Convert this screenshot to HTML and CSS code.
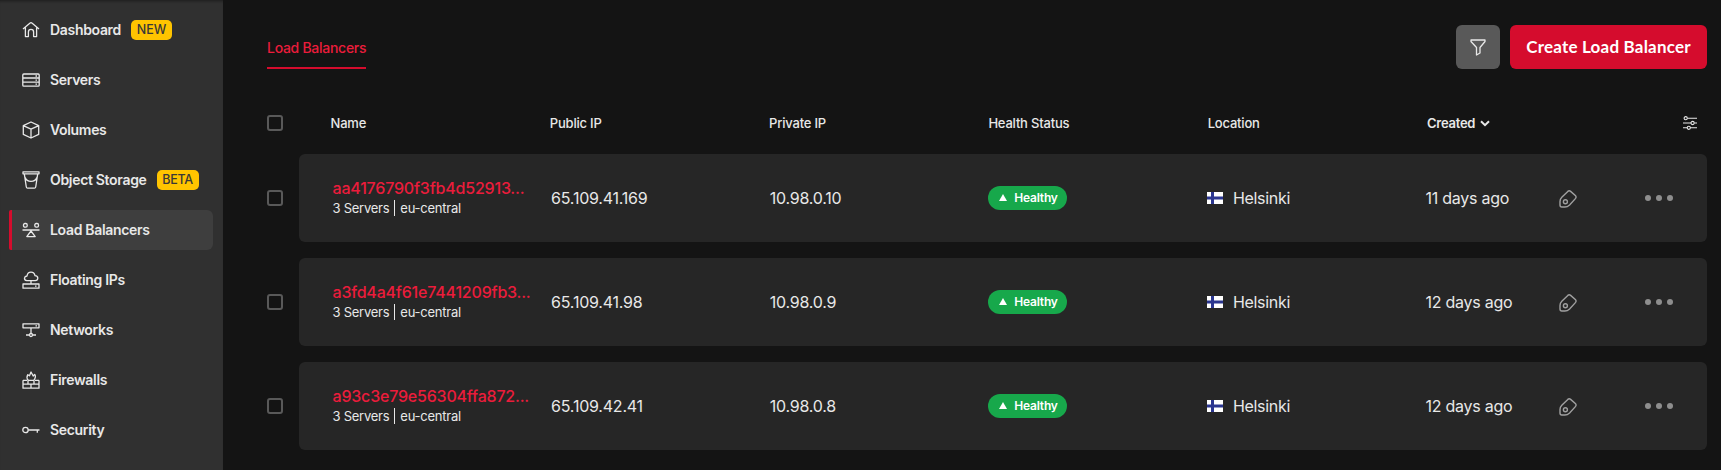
FILE: index.html
```html
<!DOCTYPE html>
<html lang="en">
<head>
<meta charset="utf-8">
<title>Load Balancers</title>
<link rel="stylesheet" href="styles.css">
</head>
<body>
<svg class="defs" width="0" height="0">
  <symbol id="tag" viewBox="0 0 20 20"><path d="M9.800 2.400Q11.200 1.200 12.600 2.400L17.600 6.800Q18.700 8 17.600 9.400L11.600 15.900Q9.400 18 6.800 18H3.800Q2 18 2 16V12.400Q2 10 3.800 8.200Z"/><circle cx="7.400" cy="12.800" r="2"/></symbol>
  <symbol id="flag" viewBox="0 0 16 12"><path fill="#fff" d="M0 0h16v12H0z"/><path fill="#2b3690" d="M4 0h3v12H4zM0 4.500h16v3H0z"/></symbol>
</svg>
<div class="app">
  <nav class="sidebar">
    <a class="item"><svg class="icon" viewBox="0 0 18 18"><path d="M1 8 7.800 2.200Q9 1.200 10.200 2.200L17 8M3.400 6.500V15.600H6.400V11Q6.400 8.400 9 8.400T11.600 11V15.600H14.600V6.500"/></svg><span class="label">Dashboard</span><span class="badge">NEW</span></a>
    <a class="item"><svg class="icon" viewBox="0 0 18 18"><rect x=".8" y="3" width="16.400" height="12.200" rx="1"/><path d="M1 7H17M1 11.200H17M13.500 5H15M13.500 9.100H15M13.500 13.200H15"/></svg><span class="label">Servers</span></a>
    <a class="item"><svg class="icon" viewBox="0 0 18 18"><path d="M9 1 16.700 4.600V13.400L9 17 1.300 13.400V4.600ZM1.300 4.600 9 8.100 16.700 4.600M9 8.100V17"/></svg><span class="label">Volumes</span></a>
    <a class="item"><svg class="icon" viewBox="0 0 18 18"><path d="M1 .8H17V2.800H1ZM2.300 2.800 4.300 16Q4.500 17.200 5.600 17.200H12.400Q13.500 17.200 13.700 16L15.700 2.800M3.200 6.500Q4.500 10.400 9 10.400T14.800 6.500"/></svg><span class="label">Object Storage</span><span class="badge beta">BETA</span></a>
    <a class="item active"><svg class="icon" viewBox="0 0 18 18"><rect x="1.500" y="2.500" width="3.700" height="3.700" rx="1.400"/><rect x="12.800" y="2.500" width="3.700" height="3.700" rx="1.400"/><path d="M.5 9H17.500M9 10 4.800 15.600H13.200Z"/></svg><span class="label">Load Balancers</span></a>
    <a class="item"><svg class="icon" viewBox="0 0 18 18"><path d="M4.800 9.600Q2.200 9.200 2.500 7 2.800 5.100 5 5 5.600 1.200 9 1.200 12.300 1.200 13 4.700 15.800 4.900 15.800 7.200 15.700 9.600 13.200 9.600ZM9 9.600V13M1 13H17V17.200H1ZM13 15.100H14.500"/></svg><span class="label">Floating IPs</span></a>
    <a class="item"><svg class="icon" viewBox="0 0 18 18"><path d="M1 2.800H17V6.800H1ZM9 6.800V12.500M4 14H7.400M10.600 14H14M13.500 4.800H15"/><circle cx="9" cy="14" r="1.500"/></svg><span class="label">Networks</span></a>
    <a class="item"><svg class="icon" viewBox="0 0 18 18"><path d="M1 9.300H5M13 9.300H17M1 9.300V17.200H17V9.300M1 13.200H17M6 9.500V13M12 9.500V13M9 13.200V17.200M6.200 9.300H11.800Q14.500 5.800 12.700 3.400L11.200 5 9 1 7.500 4.800 5.800 3.700Q4 6.800 6.200 9.300"/></svg><span class="label">Firewalls</span></a>
    <a class="item"><svg class="icon" viewBox="0 0 18 18"><circle cx="3.500" cy="9" r="2.700"/><path d="M6.200 9H17.500M15.300 9V11.800"/></svg><span class="label">Security</span></a>
  </nav>
  <main class="main">
    <header class="top">
      <span class="tab">Load Balancers</span>
      <div class="actions">
        <button class="filter"><svg viewBox="0 0 16 17"><path d="M1 1H15V2.500L10 8.500V14L6.500 16V8.500L1 2.500Z"/></svg></button>
        <button class="create">Create Load Balancer</button>
      </div>
    </header>
    <div class="line head">
      <span class="check"></span>
      <div class="cells">
        <span>Name</span><span>Public IP</span><span>Private IP</span><span>Health Status</span><span>Location</span>
        <span class="sorted">Created<svg class="chevron" viewBox="0 0 10 7"><path d="M1 1.200 5 5.200 9 1.200"/></svg></span>
        <svg class="sliders" viewBox="0 0 14 14"><path d="M4.500 2.200H14M0 7H8M11.300 7H14M0 11.800H4.200M7.400 11.800H14"/><circle cx="2.700" cy="2.200" r="1.600"/><circle cx="9.600" cy="7" r="1.600"/><circle cx="5.800" cy="11.800" r="1.600"/></svg>
      </div>
    </div>
    <div class="line">
      <span class="check"></span>
      <div class="card">
        <div class="name"><a class="link">aa4176790f3fb4d52913...</a><span class="sub">3 Servers <i class="bar"></i> eu-central</span></div>
        <span>65.109.41.169</span><span>10.98.0.10</span>
        <div class="health"><span class="pill"><i class="tri"></i>Healthy</span></div>
        <span class="loc"><svg class="flag"><use href="#flag"/></svg>Helsinki</span>
        <span class="age">11 days ago</span>
        <svg class="tag"><use href="#tag"/></svg>
        <div class="dots"><i></i><i></i><i></i></div>
      </div>
    </div>
    <div class="line">
      <span class="check"></span>
      <div class="card">
        <div class="name"><a class="link">a3fd4a4f61e7441209fb3...</a><span class="sub">3 Servers <i class="bar"></i> eu-central</span></div>
        <span>65.109.41.98</span><span>10.98.0.9</span>
        <div class="health"><span class="pill"><i class="tri"></i>Healthy</span></div>
        <span class="loc"><svg class="flag"><use href="#flag"/></svg>Helsinki</span>
        <span class="age">12 days ago</span>
        <svg class="tag"><use href="#tag"/></svg>
        <div class="dots"><i></i><i></i><i></i></div>
      </div>
    </div>
    <div class="line">
      <span class="check"></span>
      <div class="card">
        <div class="name"><a class="link">a93c3e79e56304ffa872...</a><span class="sub">3 Servers <i class="bar"></i> eu-central</span></div>
        <span>65.109.42.41</span><span>10.98.0.8</span>
        <div class="health"><span class="pill"><i class="tri"></i>Healthy</span></div>
        <span class="loc"><svg class="flag"><use href="#flag"/></svg>Helsinki</span>
        <span class="age">12 days ago</span>
        <svg class="tag"><use href="#tag"/></svg>
        <div class="dots"><i></i><i></i><i></i></div>
      </div>
    </div>
  </main>
</div>
</body>
</html>
```

FILE: styles.css
```css
* { box-sizing: border-box; }
body { margin: 0; background: #141414; color: #e8e8e8; font-family: Inter, "Liberation Sans", sans-serif; }
.defs { display: block; }
.app { display: flex; height: 470px; overflow: hidden; }
.sidebar { width: 223px; padding: 10px 10px 0 9px; background: #303030; display: flex; flex-direction: column; gap: 10px; flex: none; box-shadow: inset 0 3px 3px -2px #1c1c1c; }
.item { height: 40px; flex: none; display: flex; align-items: center; padding-left: 10px; border-left: 3px solid transparent; border-radius: 2px 6px 6px 2px; font-size: 14px; font-weight: 600; letter-spacing: -0.32px; }
.label { padding-bottom: 1px; }
.item.active { background: #3e3e3e; border-left-color: #d50c2d; }
.icon { width: 18px; height: 18px; margin-right: 10px; fill: none; stroke: #e8e8e8; stroke-width: 1.3; stroke-linejoin: round; }
.badge { height: 20px; width: 41px; margin-left: 10px; border-radius: 5px; background: #ffc400; color: #383838; font-size: 12.5px; line-height: 20px; font-weight: 500; text-align: center; letter-spacing: 0; }
.beta { width: 42px; letter-spacing: -0.3px; }
.main { flex: 1; padding: 25px 14px 0 44px; display: flex; flex-direction: column; }
.top { display: flex; justify-content: space-between; height: 44px; flex: none; margin-bottom: 38px; }
.tab { height: 44px; width: 99px; line-height: 46px; color: #eb1c3b; border-bottom: 2px solid #d50c2d; font-size: 14px; font-weight: 500; letter-spacing: -0.28px; white-space: nowrap; }
.actions { display: flex; gap: 10px; }
button { border: 0; padding: 0; border-radius: 6px; height: 44px; color: #fff; }
.filter { width: 44px; background: #595959; display: flex; align-items: center; justify-content: center; }
.filter svg { width: 16px; height: 17px; fill: none; stroke: #e8e8e8; stroke-width: 1.3; stroke-linejoin: round; }
.create { width: 197px; padding-bottom: 2px; background: #d50c2d; font: 700 17px Lato, sans-serif; letter-spacing: 0.2px; white-space: nowrap; }
.line { display: flex; align-items: center; height: 88px; flex: none; margin-bottom: 16px; }
.head { height: 32px; margin-bottom: 15px; }
.check { width: 16px; height: 16px; border: 2px solid #595959; border-radius: 3px; margin-right: 16px; flex: none; }
.cells, .card { display: flex; align-items: center; width: 1408px; }
.cells { padding-left: 31.5px; font-size: 13px; font-weight: 500; letter-spacing: -0.2px; }
.cells > span { width: 219.3px; flex: none; }
.cells .sorted { width: 256.5px; font-weight: 600; display: flex; align-items: center; letter-spacing: -0.25px; }
.chevron { width: 10px; height: 7px; margin-left: 5px; fill: none; stroke: #e8e8e8; stroke-width: 2; }
.sliders { width: 14px; height: 14px; fill: none; stroke: #e8e8e8; stroke-width: 1.1; }
.card { height: 88px; padding-left: 33.5px; background: #262626; border-radius: 6px; font-size: 16px; letter-spacing: -0.22px; }
.card > span, .card > div { width: 218.6px; flex: none; }
.name { display: flex; flex-direction: column; }
.link { color: #eb1c3b; font-weight: 500; line-height: 20px; letter-spacing: -0.2px; }
.sub { font-size: 13px; line-height: 20px; letter-spacing: -0.25px; display: flex; align-items: center; }
.bar { width: 1px; height: 16px; background: #e8e8e8; margin: 0 5px; }
.pill { display: flex; align-items: center; width: 79px; height: 24px; border-radius: 12px; background: #17a84b; color: #fff; font-size: 12px; font-weight: 600; padding: 0 0 1px 11px; letter-spacing: -0.2px; }
.tri { border: 4px solid transparent; border-top: 0; border-bottom: 7px solid #fff; margin-right: 7px; }
.card > .loc { display: flex; align-items: center; letter-spacing: -0.3px; }
.flag { width: 16px; height: 12px; margin-right: 10px; }
.card > .age { width: 132.5px; letter-spacing: -0.25px; }
.tag { width: 20px; height: 20px; margin-top: 2px; fill: none; stroke: #a0a0a0; stroke-width: 1.4; }
.card > .dots { display: flex; gap: 5px; width: auto; margin-left: 67px; }
.dots i { width: 6px; height: 6px; border-radius: 50%; background: #8e8e8e; }
```
